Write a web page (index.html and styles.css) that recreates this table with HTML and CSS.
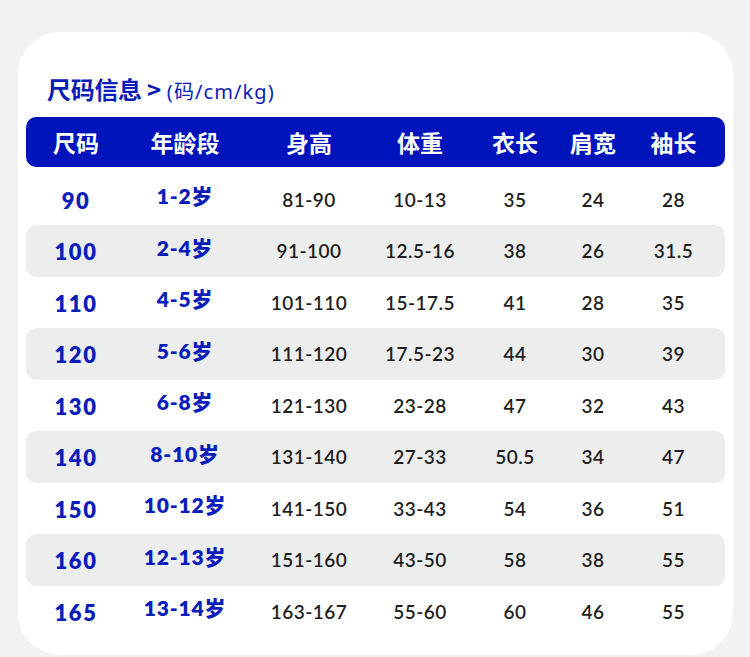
FILE: index.html
```html
<!DOCTYPE html>
<html lang="zh">
<head>
<meta charset="utf-8">
<link rel="stylesheet" href="styles.css">
</head>
<body>
<div class="card">
  <div class="title"><span class="title-main">尺码信息 &gt;</span><span class="title-unit">(码/cm/kg)</span></div>
  <div class="table">
    <div class="row head"><div>尺码</div><div>年龄段</div><div>身高</div><div>体重</div><div>衣长</div><div>肩宽</div><div>袖长</div></div>
    <div class="row"><div class="size">90</div><div class="age">1-2岁</div><div>81-90</div><div>10-13</div><div>35</div><div>24</div><div>28</div></div>
    <div class="row alt"><div class="size">100</div><div class="age">2-4岁</div><div>91-100</div><div>12.5-16</div><div>38</div><div>26</div><div>31.5</div></div>
    <div class="row"><div class="size">110</div><div class="age">4-5岁</div><div>101-110</div><div>15-17.5</div><div>41</div><div>28</div><div>35</div></div>
    <div class="row alt"><div class="size">120</div><div class="age">5-6岁</div><div>111-120</div><div>17.5-23</div><div>44</div><div>30</div><div>39</div></div>
    <div class="row"><div class="size">130</div><div class="age">6-8岁</div><div>121-130</div><div>23-28</div><div>47</div><div>32</div><div>43</div></div>
    <div class="row alt"><div class="size">140</div><div class="age">8-10岁</div><div>131-140</div><div>27-33</div><div>50.5</div><div>34</div><div>47</div></div>
    <div class="row"><div class="size">150</div><div class="age">10-12岁</div><div>141-150</div><div>33-43</div><div>54</div><div>36</div><div>51</div></div>
    <div class="row alt"><div class="size">160</div><div class="age">12-13岁</div><div>151-160</div><div>43-50</div><div>58</div><div>38</div><div>55</div></div>
    <div class="row"><div class="size">165</div><div class="age">13-14岁</div><div>163-167</div><div>55-60</div><div>60</div><div>46</div><div>55</div></div>
  </div>
</div>
</body>
</html>
```
FILE: styles.css
```css
html, body {
  margin: 0;
  padding: 0;
  background: #f2f2f2;
  height: 657px;
  overflow: hidden;
}
body {
  font-family: Lato, "Noto Sans CJK SC", sans-serif;
}
.card {
  margin: 32px 0 0 18px;
  width: 715px;
  height: 623px;
  background: #ffffff;
  border-radius: 42px;
  padding: 41px 8px 0 8px;
  box-sizing: border-box;
}
.title {
  height: 32px;
  line-height: 32px;
  padding-left: 21px;
  margin-bottom: 12px;
  color: #0a1db8;
  white-space: nowrap;
}
.title-main {
  font-family: "Noto Sans CJK SC", sans-serif;
  font-weight: 700;
  font-size: 24px;
  letter-spacing: -0.3px;
}
.title-unit {
  font-family: "Noto Sans", "Noto Sans CJK SC", sans-serif;
  font-size: 20px;
  letter-spacing: 1.1px;
  margin-left: 6px;
}
.table {
  display: flex;
  flex-direction: column;
}
.row {
  display: grid;
  grid-template-columns: 100px 118px 130px 92px 98px 58px 103px;
  height: 51.5px;
  align-items: center;
  border-radius: 10px;
  font-size: 19px;
  letter-spacing: 0.5px;
  color: #1f1f1f;
  font-weight: 600;
}
.row > div {
  text-align: center;
}
.row.head {
  height: 50px;
  background: #0014bb;
  color: #ffffff;
  font-family: "Noto Sans CJK SC", sans-serif;
  font-weight: 700;
  font-size: 23px;
  letter-spacing: 0;
  margin-bottom: 6.5px;
}
.row.alt {
  background: #eceded;
}
.size {
  color: #0a1db8;
  font-weight: 800;
  font-size: 22px;
  letter-spacing: 1.5px;
  padding-top: 2px;
}
.age {
  color: #0a1db8;
  font-weight: 800;
  font-size: 21px;
  letter-spacing: 0.8px;
  font-family: Lato, "Noto Sans CJK SC", sans-serif;
  margin-top: -8px;
}
```
